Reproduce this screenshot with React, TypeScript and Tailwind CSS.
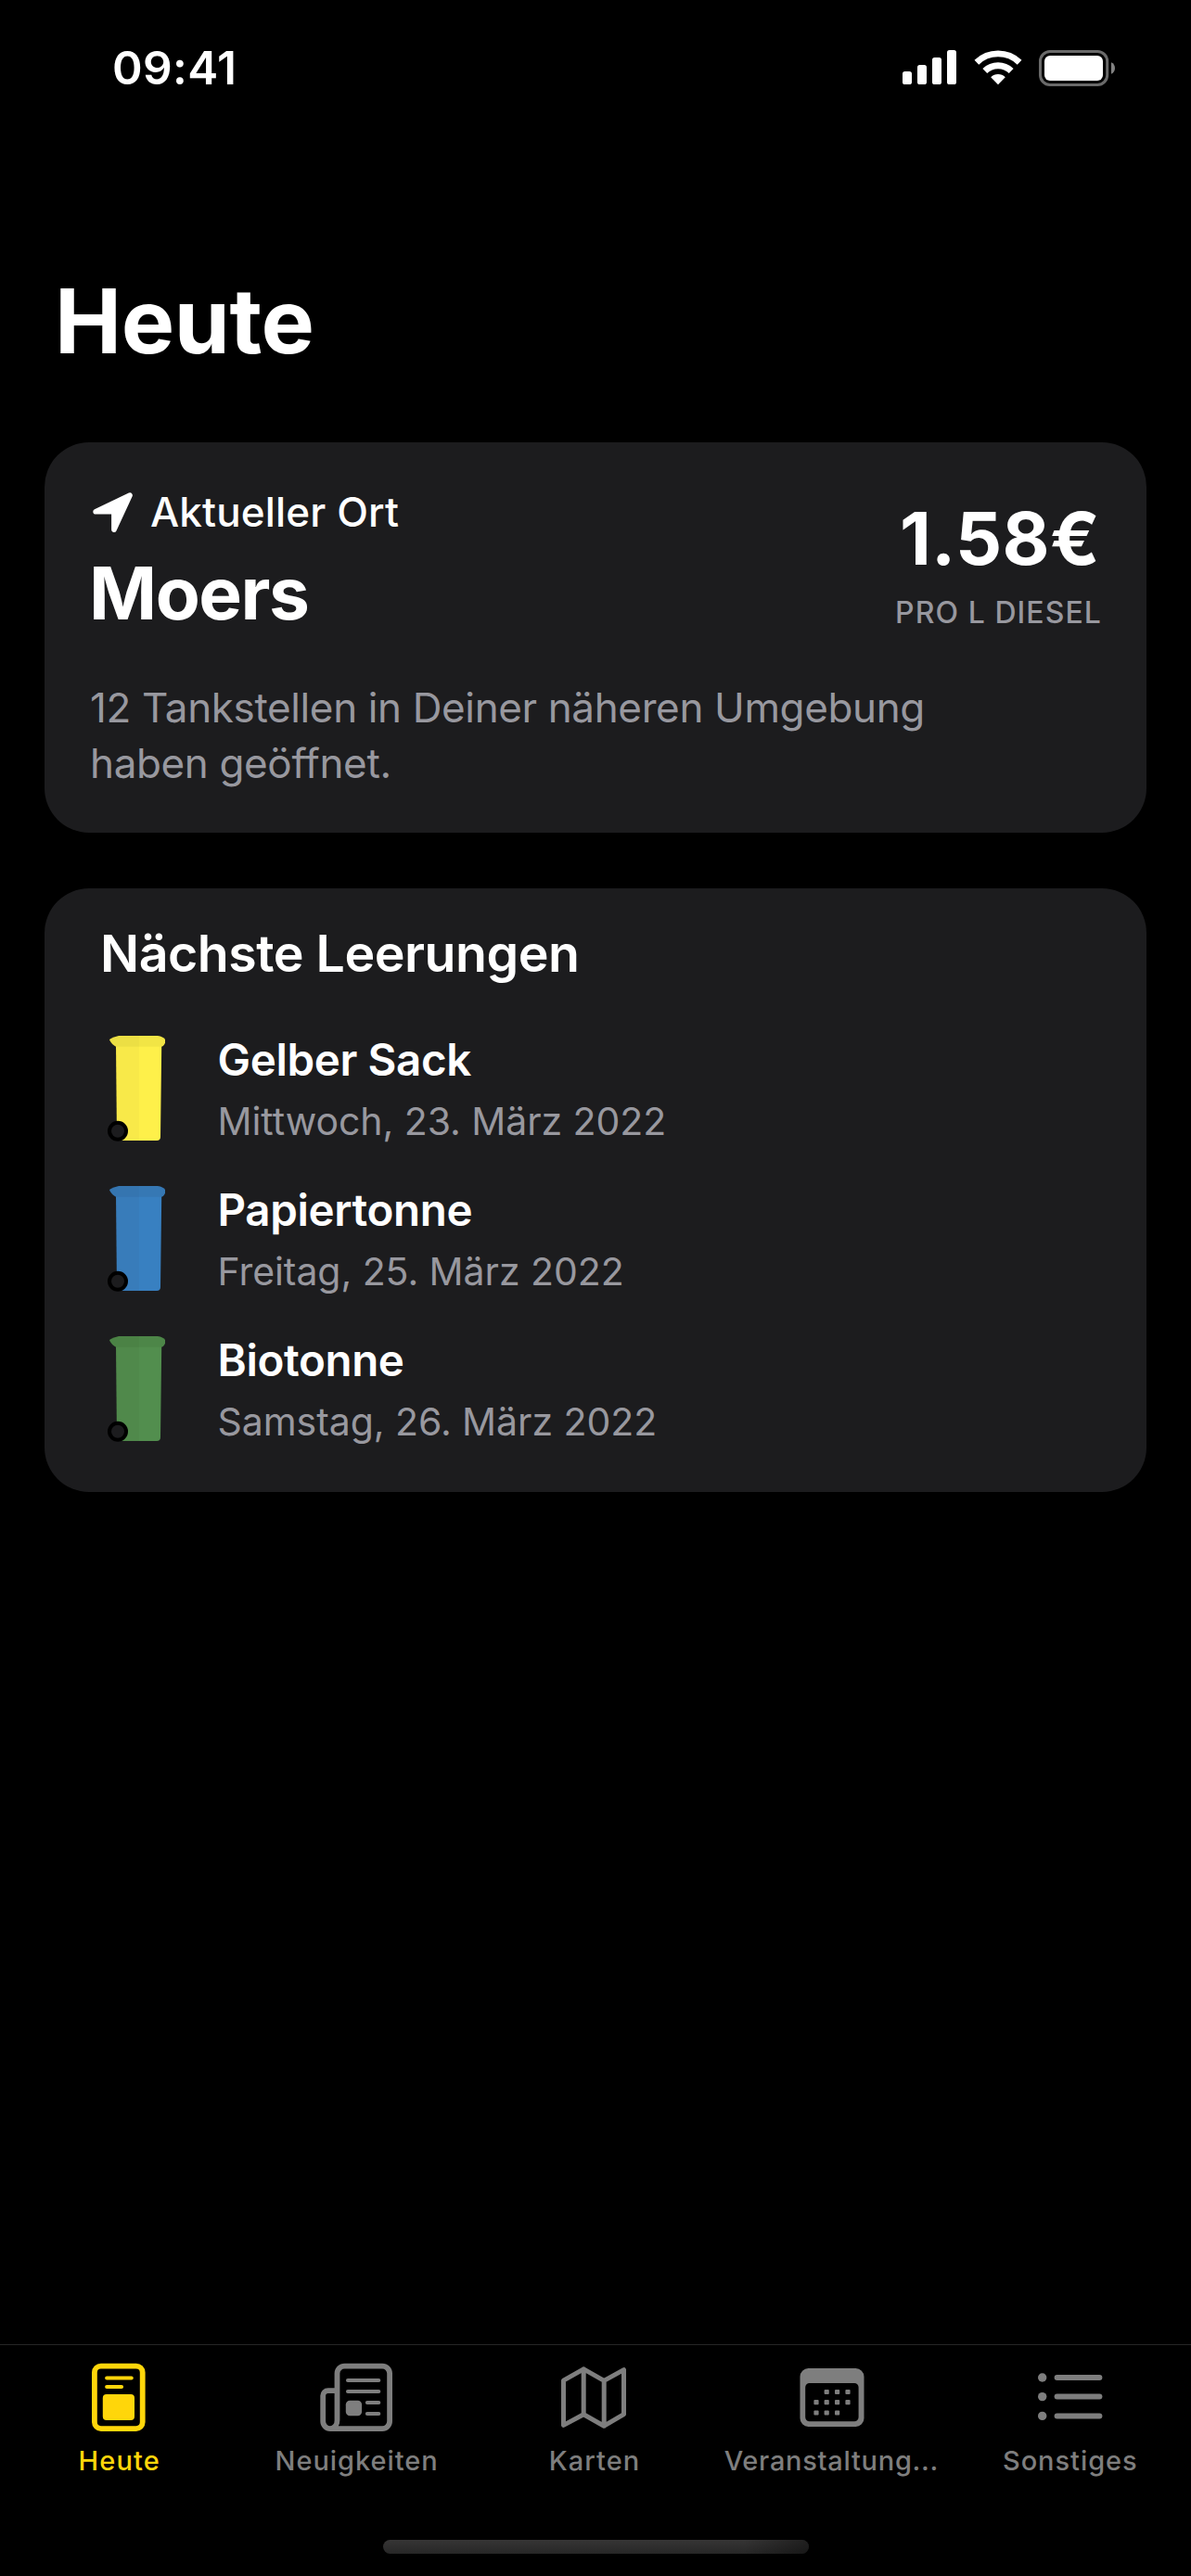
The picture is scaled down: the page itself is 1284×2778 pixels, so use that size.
import type { ReactNode } from 'react';

type BinColors = { lidLeft: string; lidRight: string; bodyLeft: string; bodyRight: string };

function SignalIcon() {
  return (
    <svg width="58" height="38" viewBox="0 0 58 38" fill="currentColor">
      <rect x="0" y="23" width="10" height="14" rx="2.6" />
      <rect x="16" y="16" width="10" height="21" rx="2.6" />
      <rect x="32" y="8" width="10" height="29" rx="2.6" />
      <rect x="48" y="0" width="10" height="37" rx="2.6" />
    </svg>
  );
}

function WifiIcon() {
  return (
    <svg width="52" height="38" viewBox="0 0 52 38" fill="none">
      <path d="M2.9 13.2A33.3 33.3 0 0 1 49.1 13.2" stroke="currentColor" strokeWidth="6.8" />
      <path d="M11.8 22.4A20.5 20.5 0 0 1 40.2 22.4" stroke="currentColor" strokeWidth="7" />
      <path d="M26 37.2L18.2 29.2A11.3 11.3 0 0 1 33.8 29.2Z" fill="currentColor" />
    </svg>
  );
}

function BatteryIcon() {
  return (
    <svg width="83" height="39" viewBox="0 0 83 39" fill="none">
      <rect x="1.5" y="1.5" width="72.2" height="36" rx="10.5" stroke="#6a6a6a" strokeWidth="3" />
      <rect x="6" y="6" width="63" height="27" rx="6" fill="#fff" />
      <path d="M78 13.2C80.6 14.2 82 16.6 82 19.5C82 22.4 80.6 24.8 78 25.8Z" fill="#828282" />
    </svg>
  );
}

function LocationArrow() {
  return (
    <svg width="52" height="52" viewBox="0 0 52 52" className="shrink-0">
      <path
        d="M7.1 25.7L44.1 8.1L26.9 45.2V25.7Z"
        fill="#fff"
        stroke="#fff"
        strokeWidth="5.6"
        strokeLinejoin="round"
      />
    </svg>
  );
}

function Bin({ lidLeft, lidRight, bodyLeft, bodyRight }: BinColors) {
  return (
    <svg width="72" height="120" viewBox="0 0 72 120" className="shrink-0">
      <path d="M13 14H38V116H14Z" fill={bodyLeft} />
      <path d="M38 14H62.2L61 112Q61 116 57 116H38Z" fill={bodyRight} />
      <path d="M38 3H16Q6 5.5 6 7.5Q9 13 13 14.7H38Z" fill={lidLeft} />
      <path d="M38 3H58Q64 3.8 66 7V10.5Q65 14 62 14.7H38Z" fill={lidRight} />
      <circle cx="15" cy="105.8" r="9" fill="#1c1c1e" stroke="#000" strokeWidth="4" />
    </svg>
  );
}

function TabIcon({ children }: { children: ReactNode }) {
  return (
    <svg width="80" height="80" viewBox="0 0 80 80" fill="none" stroke="currentColor" strokeLinecap="round" strokeLinejoin="round">
      {children}
    </svg>
  );
}

const todayIcon = (
  <TabIcon>
    <rect x="13.9" y="5.6" width="51.8" height="67.5" rx="7" strokeWidth="5.8" />
    <path d="M27.2 18.5H53.7M27.2 28H43" strokeWidth="4.2" />
    <rect x="22.8" y="36" width="34.2" height="28" rx="4" fill="currentColor" stroke="none" />
  </TabIcon>
);

const newsIcon = (
  <TabIcon>
    <g transform="translate(-0.7 0)">
      <path
        d="M19.2 64V13.5A8 8 0 0 1 27.2 5.6H67.8A8 8 0 0 1 75.8 13.5V65A8 8 0 0 1 67.8 73.1H11.8A7.9 8 0 0 1 3.9 65V37.5A5.4 5.4 0 0 1 9.3 32.1H18M19.2 64A7.6 8.6 0 0 1 11.8 73.1"
        strokeWidth="5.8"
      />
      <path d="M30.7 21H64M30.7 33H64M51.6 45H64M51.6 57H64" strokeWidth="4.1" />
      <rect x="28.5" y="42.8" width="17.3" height="16.4" rx="4.5" fill="currentColor" stroke="none" />
    </g>
  </TabIcon>
);

const mapIcon = (
  <TabIcon>
    <path
      d="M6.5 21.2L28.2 8.8L50.2 21.4L71.5 9.6V57.6L50.2 70.2L28.2 57.8L6.5 69.4ZM28.2 8.8V57.8M50.2 21.4V70.2"
      strokeWidth="5"
    />
  </TabIcon>
);

const calendarIcon = (
  <TabIcon>
    <path
      d="M14.5 8H65.5A9 9 0 0 1 74.5 17V62A9 9 0 0 1 65.5 71H14.5A9 9 0 0 1 5.5 62V17A9 9 0 0 1 14.5 8ZM15.7 24A4.5 4.5 0 0 0 11.2 28.5V60.7A4.5 4.5 0 0 0 15.7 65.2H64.1A4.5 4.5 0 0 0 68.6 60.7V28.5A4.5 4.5 0 0 0 64.1 24Z"
      fill="currentColor"
      fillRule="evenodd"
      stroke="none"
    />
    {[
      [34.2, 33.5], [45.6, 33.5], [57, 33.5],
      [23, 44.7], [34.2, 44.7], [45.6, 44.7], [57, 44.7],
      [23, 56], [34.2, 56], [45.6, 56],
    ].map(([x, y]) => (
      <rect key={`${x}-${y}`} x={x - 2.6} y={y - 2.6} width="5.2" height="5.2" rx="1" fill="currentColor" stroke="none" />
    ))}
  </TabIcon>
);

const listIcon = (
  <TabIcon>
    {[18, 38.6, 59.4].map((y) => (
      <g key={y}>
        <circle cx="9.7" cy={y} r="4.7" fill="currentColor" stroke="none" />
        <path d={`M25.6 ${y}H71.4`} strokeWidth="6" />
      </g>
    ))}
  </TabIcon>
);

const pickups: { name: string; date: string; colors: BinColors }[] = [
  {
    name: 'Gelber Sack',
    date: 'Mittwoch, 23. März 2022',
    colors: { lidLeft: '#ecdf44', lidRight: '#f2e545', bodyLeft: '#f8e949', bodyRight: '#fef04a' },
  },
  {
    name: 'Papiertonne',
    date: 'Freitag, 25. März 2022',
    colors: { lidLeft: '#3575b0', lidRight: '#3678b4', bodyLeft: '#387cba', bodyRight: '#3880c1' },
  },
  {
    name: 'Biotonne',
    date: 'Samstag, 26. März 2022',
    colors: { lidLeft: '#4b8245', lidRight: '#4d8648', bodyLeft: '#50894b', bodyRight: '#528e4e' },
  },
];

const tabs = [
  { label: 'Heute', icon: todayIcon, tracking: 'tracking-[1.1px] pl-px', active: true },
  { label: 'Neuigkeiten', icon: newsIcon, tracking: 'tracking-[0.95px]' },
  { label: 'Karten', icon: mapIcon, tracking: 'tracking-[1.05px]' },
  { label: 'Veranstaltung...', icon: calendarIcon, tracking: 'tracking-[0.72px] pr-[2px]' },
  { label: 'Sonstiges', icon: listIcon, tracking: 'tracking-[0.95px]' },
];

export default function App() {
  return (
    <div className="flex h-[2778px] w-[1284px] flex-col overflow-hidden bg-black font-['Inter',sans-serif] text-white">
      <header className="flex h-[146px] shrink-0 items-center justify-between pl-[121px] pr-[81px]">
        <span className="text-[49.5px] font-semibold leading-[60px] tracking-[0.38px]">09:41</span>
        <div className="flex items-center">
          <SignalIcon />
          <span className="ml-[18.5px]"><WifiIcon /></span>
          <span className="ml-[18.5px]"><BatteryIcon /></span>
        </div>
      </header>

      <main className="flex flex-1 flex-col px-12 pt-[140px]">
        <h1 className="pl-[11px] text-[96.5px] font-bold leading-[120px] tracking-[-0.39px]">Heute</h1>

        <section className="mt-[71px] h-[421px] rounded-[48px] bg-[#1c1c1e] px-12 pt-[45px]">
          <div className="flex justify-between">
            <div>
              <div className="flex h-[60px] items-center">
                <LocationArrow />
                <span className="ml-[14px] text-[44px] font-medium leading-[60px] tracking-[0.14px]">Aktueller Ort</span>
              </div>
              <h2 className="mt-[12.5px] text-[78.5px] font-bold leading-[90px] tracking-[-1.5px]">Moers</h2>
            </div>
            <div className="flex flex-col items-end pt-[13.5px]">
              <div className="pr-[2px] text-[78.5px] font-bold leading-[90px] tracking-[0.3px]">1.58€</div>
              <div className="mt-[15px] text-[32px] font-medium leading-[40px] tracking-[1.07px] text-[#98989f]">PRO L DIESEL</div>
            </div>
          </div>
          <p className="mt-[48.5px] pl-px text-[44px] leading-[60px] tracking-[-0.37px] text-[#98989f]">
            12 Tankstellen in Deiner näheren Umgebung
            <br />
            haben geöffnet.
          </p>
        </section>

        <section className="mt-[60px] h-[651px] rounded-[48px] bg-[#1c1c1e] px-[60px] pt-[35px]">
          <h2 className="text-[55.5px] font-semibold leading-[70px] tracking-[-0.51px]">Nächste Leerungen</h2>
          <ul className="mt-[30px]">
            {pickups.map((p) => (
              <li key={p.name} className="flex h-[162px] items-center pl-1">
                <Bin {...p.colors} />
                <div className="mb-[2px] ml-[50.5px]">
                  <div className="text-[47.5px] font-semibold leading-[60px] tracking-[-0.38px]">{p.name}</div>
                  <div className="mt-[11px] text-[41px] leading-[50px] tracking-[-0.06px] text-[#98989f]">{p.date}</div>
                </div>
              </li>
            ))}
          </ul>
        </section>
      </main>

      <footer className="relative h-[250px] shrink-0 border-t border-[#262626]">
        <nav className="grid grid-cols-5 pr-[2px] pt-[17px]">
          {tabs.map((t) => (
            <div key={t.label} className={t.active ? 'flex flex-col items-center text-[#ffd60a]' : 'flex flex-col items-center text-[#7e7e7e]'}>
              {t.icon}
              <span className={`mt-[9.5px] whitespace-nowrap text-[29px] font-medium leading-[36px] ${t.tracking}`}>{t.label}</span>
            </div>
          ))}
        </nav>
        <div className="absolute left-[413px] top-[210px] h-[15px] w-[459px] overflow-hidden rounded-full bg-linear-to-b from-[#363535] to-[#272727]">
          <div className="ml-auto h-full w-[70px] bg-linear-to-r from-transparent to-black/40" />
        </div>
      </footer>
    </div>
  );
}
